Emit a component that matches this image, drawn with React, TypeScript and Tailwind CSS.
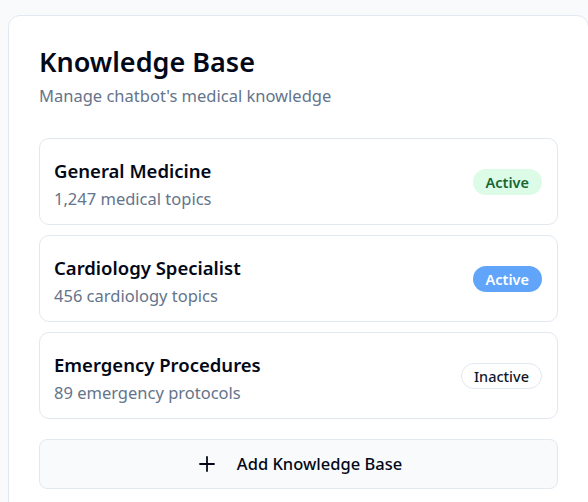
const items = [
  { name: "General Medicine", info: "1,247 medical topics", status: "active-green" },
  { name: "Cardiology Specialist", info: "456 cardiology topics", status: "active-blue" },
  { name: "Emergency Procedures", info: "89 emergency protocols", status: "inactive" },
];

function Badge({ status }: { status: string }) {
  if (status === "active-green") {
    return (
      <span className="rounded-full bg-[#dcfce7] px-[13px] py-[3px] text-[14.5px] font-semibold leading-5 text-[#166534]">
        Active
      </span>
    );
  }
  if (status === "active-blue") {
    return (
      <span className="rounded-full bg-[#60a5fa] px-[13px] py-[3px] text-[14.5px] font-semibold leading-5 text-white">
        Active
      </span>
    );
  }
  return (
    <span className="rounded-full border border-[#e2e8f0] bg-white px-3 py-[2px] text-[14.5px] font-medium leading-5 text-[#0f172a]">
      Inactive
    </span>
  );
}

export default function App() {
  return (
    <div
      className="h-[502px] overflow-hidden bg-[#f8fafc] pl-2 pt-[15px]"
      style={{ fontFamily: '"Noto Sans", sans-serif' }}
    >
      <div className="w-[581px] rounded-xl border border-[#e2e8f0] bg-white px-[30px] pt-[28px] pb-8">
        {/* header */}
        <h1 className="text-[27px] font-semibold leading-9 text-[#020817]">Knowledge Base</h1>
        <p className="mt-[4px] text-[16.5px] leading-6 text-[#64748b]">Manage chatbot's medical knowledge</p>

        {/* list */}
        <div className="mt-[30px] flex flex-col gap-[10px]">
          {items.map((item) => (
            <div
              key={item.name}
              className="flex h-[87px] items-center justify-between rounded-[10px] border border-[#e2e8f0] pl-[14px] pr-[15px]"
            >
              <div className="pt-[6px]">
                <div className="text-[18.5px] font-semibold leading-6 text-[#020817]">{item.name}</div>
                <div className="mt-[4px] text-[16.5px] leading-6 text-[#64748b]">{item.info}</div>
              </div>
              <Badge status={item.status} />
            </div>
          ))}
        </div>

        {/* add button */}
        <button className="mt-[20px] flex h-[50px] w-full items-center justify-center gap-[18px] rounded-lg border border-[#e2e8f0] bg-[#f8fafc] text-[16.5px] font-medium text-[#020817]">
          <svg width="24" height="24" viewBox="0 0 24 24" fill="none" stroke="currentColor" strokeWidth="1.8" strokeLinecap="round">
            <path d="M5 12h14" />
            <path d="M12 5v14" />
          </svg>
          Add Knowledge Base
        </button>
      </div>
    </div>
  );
}
